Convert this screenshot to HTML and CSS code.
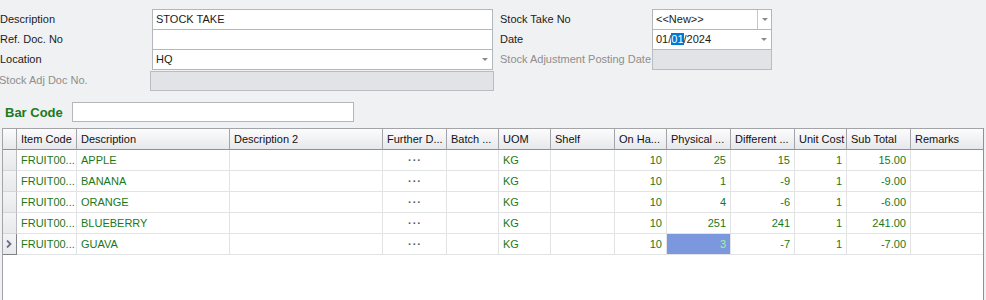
FILE: index.html
```html
<!DOCTYPE html>
<html>
<head>
<meta charset="utf-8">
<link rel="stylesheet" href="styles.css">
</head>
<body>
<div class="form">
  <div class="lbl">Description</div>
  <div class="box">STOCK TAKE</div>
  <div></div>
  <div class="lbl">Stock Take No</div>
  <div class="box combo"><span class="val">&lt;&lt;New&gt;&gt;</span><span class="btn"><i class="arrow"></i></span></div>

  <div class="lbl">Ref. Doc. No</div>
  <div class="box"></div>
  <div></div>
  <div class="lbl">Date</div>
  <div class="box combo"><span class="val">01/<span class="sel">01</span>/2024</span><span class="drop"><i class="arrow"></i></span></div>

  <div class="lbl">Location</div>
  <div class="box combo"><span class="val">HQ</span><span class="drop"><i class="arrow"></i></span></div>
  <div></div>
  <div class="lbl dis">Stock Adjustment Posting Date</div>
  <div class="box disabled"></div>

  <div class="lbl dis cut">Stock Adj Doc No.</div>
  <div class="box disabled wide"></div>
</div>

<div class="barcode">
  <div class="bclbl">Bar Code</div>
  <div class="bcbox"></div>
</div>

<div class="grid">
  <div class="row head">
    <div class="c ind"></div>
    <div class="c">Item Code</div>
    <div class="c">Description</div>
    <div class="c">Description 2</div>
    <div class="c">Further D...</div>
    <div class="c">Batch ...</div>
    <div class="c">UOM</div>
    <div class="c">Shelf</div>
    <div class="c">On Ha...</div>
    <div class="c">Physical ...</div>
    <div class="c">Different ...</div>
    <div class="c">Unit Cost</div>
    <div class="c">Sub Total</div>
    <div class="c last">Remarks</div>
  </div>

  <div class="row">
    <div class="c ind"></div>
    <div class="c">FRUIT00...</div>
    <div class="c">APPLE</div>
    <div class="c"></div>
    <div class="c dots">···</div>
    <div class="c"></div>
    <div class="c">KG</div>
    <div class="c"></div>
    <div class="c num">10</div>
    <div class="c num">25</div>
    <div class="c num">15</div>
    <div class="c num">1</div>
    <div class="c num">15.00</div>
    <div class="c last"></div>
  </div>

  <div class="row">
    <div class="c ind"></div>
    <div class="c">FRUIT00...</div>
    <div class="c">BANANA</div>
    <div class="c"></div>
    <div class="c dots">···</div>
    <div class="c"></div>
    <div class="c">KG</div>
    <div class="c"></div>
    <div class="c num">10</div>
    <div class="c num">1</div>
    <div class="c num">-9</div>
    <div class="c num">1</div>
    <div class="c num">-9.00</div>
    <div class="c last"></div>
  </div>

  <div class="row">
    <div class="c ind"></div>
    <div class="c">FRUIT00...</div>
    <div class="c">ORANGE</div>
    <div class="c"></div>
    <div class="c dots">···</div>
    <div class="c"></div>
    <div class="c">KG</div>
    <div class="c"></div>
    <div class="c num">10</div>
    <div class="c num">4</div>
    <div class="c num">-6</div>
    <div class="c num">1</div>
    <div class="c num">-6.00</div>
    <div class="c last"></div>
  </div>

  <div class="row">
    <div class="c ind"></div>
    <div class="c">FRUIT00...</div>
    <div class="c">BLUEBERRY</div>
    <div class="c"></div>
    <div class="c dots">···</div>
    <div class="c"></div>
    <div class="c">KG</div>
    <div class="c"></div>
    <div class="c num">10</div>
    <div class="c num">251</div>
    <div class="c num">241</div>
    <div class="c num">1</div>
    <div class="c num">241.00</div>
    <div class="c last"></div>
  </div>

  <div class="row current">
    <div class="c ind"><svg class="chev" width="6" height="8" viewBox="0 0 6 8"><path d="M1 0.5 L4.5 4 L1 7.5" fill="none" stroke="#6c6c8c" stroke-width="1.8"/></svg></div>
    <div class="c">FRUIT00...</div>
    <div class="c">GUAVA</div>
    <div class="c"></div>
    <div class="c dots">···</div>
    <div class="c"></div>
    <div class="c">KG</div>
    <div class="c"></div>
    <div class="c num">10</div>
    <div class="c num focus">3</div>
    <div class="c num">-7</div>
    <div class="c num">1</div>
    <div class="c num">-7.00</div>
    <div class="c last"></div>
  </div>
</div>
</body>
</html>
```

FILE: styles.css
```css
html, body {
  margin: 0;
  padding: 0;
  background: #f0f1f3;
  font-family: "Liberation Sans", Arial, sans-serif;
  font-size: 11px;
  color: #1b1b1b;
  overflow: hidden;
}

.form {
  display: grid;
  grid-template-columns: 152px 341px 7px 152px 120px;
  grid-auto-rows: 20px;
  padding-top: 9px;
}

.lbl {
  line-height: 20px;
  white-space: nowrap;
}
.lbl.dis { color: #8e8e8e; }
.lbl.cut { margin-left: -1px; line-height: 22px; }

.box {
  box-sizing: border-box;
  height: 21px;
  background: #ffffff;
  border: 1px solid #b3b7bb;
  padding-left: 3px;
  line-height: 19px;
  white-space: nowrap;
  position: relative;
}
.box.disabled {
  background: #e2e3e7;
  border-color: #b9bcc0;
}
.box.wide {
  margin-left: -2px;
  width: 344px;
  margin-top: 2px;
  height: 20px;
}

.combo {
  display: flex;
  align-items: stretch;
}
.combo .val { flex: 1; }
.combo .btn,
.combo .drop {
  width: 13px;
  display: flex;
  align-items: center;
  justify-content: center;
}
.combo .btn {
  border-left: 1px solid #c3c6ca;
}
.combo .drop { margin-right: 1px; }
.arrow {
  display: block;
  width: 0;
  height: 0;
  border-left: 3px solid transparent;
  border-right: 3px solid transparent;
  border-top: 3px solid #8a8a8a;
}
.sel {
  background: #0078d7;
  color: #ffffff;
}

.barcode {
  display: flex;
  align-items: center;
  margin-top: 13px;
  padding-left: 5px;
}
.bclbl {
  font-size: 13px;
  font-weight: bold;
  color: #207a20;
  width: 67px;
}
.bcbox {
  box-sizing: border-box;
  width: 282px;
  height: 20px;
  background: #ffffff;
  border: 1px solid #b3b7bb;
}

.grid {
  box-sizing: border-box;
  margin-top: 6px;
  margin-left: 2px;
  width: 982px;
  height: 172px;
  background: #ffffff;
  border: 1px solid #a2a4a8;
  border-bottom: none;
  border-right-color: #8f9195;
}

.row {
  display: grid;
  grid-template-columns: 14px 60px 153px 153px 64px 52px 52px 64px 52px 64px 64px 52px 64px 72px;
  height: 21px;
  color: #1a781a;
}
.c {
  box-sizing: border-box;
  height: 21px;
  line-height: 20px;
  padding: 0 3px 0 4px;
  border-right: 1px solid #e2e3e5;
  border-bottom: 1px solid #e2e3e5;
  white-space: nowrap;
  overflow: hidden;
}
.c.last { border-right: none; }
.num { text-align: right; padding-right: 4px; }
.dots {
  text-align: center;
  color: #5a5a5a;
  font-weight: bold;
  letter-spacing: 1px;
}
.focus {
  background: #7b98de;
  color: #a6f2a0;
}

.head .c {
  background: linear-gradient(#fcfcfd, #e7e8eb);
  color: #111111;
  border-right: 1px solid #a3a5a9;
  border-bottom: 1px solid #8e9094;
}
.head .c.last { border-right: none; }

.ind {
  padding: 0;
  background: linear-gradient(#f4f4f6, #e8e9ec);
  border-right: 1px solid #b9bbbf;
  border-bottom: 1px solid #d6d7da;
  display: flex;
  align-items: center;
  padding-left: 3px;
}
.current .ind {
  border-right-color: #808287;
  border-bottom-color: #808287;
}
.chev { display: block; }
```
